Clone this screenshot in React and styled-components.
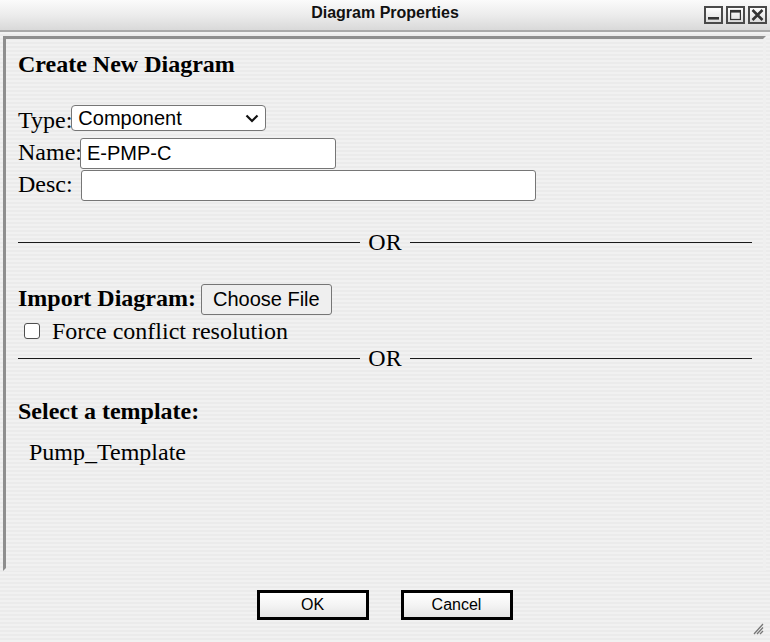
import React from "react";
import styled, { createGlobalStyle } from "styled-components";

const Global = createGlobalStyle`
  html, body { margin: 0; padding: 0; }
  body { width: 770px; height: 642px; overflow: hidden; }
  * { box-sizing: border-box; }
`;

const Window = styled.div`
  position: relative;
  width: 770px;
  height: 642px;
  display: flex;
  flex-direction: column;
  background: repeating-linear-gradient(
    to bottom,
    #f1f1f1 0px,
    #f1f1f1 2px,
    #ebebeb 2px,
    #ebebeb 4px
  );
  font-family: "Liberation Serif", "Times New Roman", serif;
  color: #000;
`;

const TitleBar = styled.div`
  height: 32px;
  flex: none;
  display: flex;
  align-items: center;
  justify-content: center;
  position: relative;
  background: linear-gradient(to bottom, #fbfbfb 0%, #ececec 50%, #d9d9d9 100%);
  border-bottom: 2px solid #a9a9a9;
`;

const Title = styled.div`
  font-family: "Liberation Sans", Arial, sans-serif;
  font-weight: bold;
  font-size: 16px;
  color: #111;
  margin-bottom: 4px;
`;

const Controls = styled.div`
  position: absolute;
  right: 3px;
  top: 6px;
  display: flex;
  gap: 3px;
`;

const CtrlBox = styled.div`
  width: 19px;
  height: 18px;
  border: 2px solid #4a4a4a;
  background: linear-gradient(to bottom, #ffffff, #dcdcdc);
  display: flex;
  align-items: center;
  justify-content: center;
`;

const Body = styled.div`
  flex: 1;
  display: flex;
  flex-direction: column;
  padding: 4px 4px 0 3px;
`;

const Panel = styled.div`
  height: 535px;
  flex: none;
  border-style: solid;
  border-width: 3px;
  border-color: #8e8e8e #efefef #efefef #8e8e8e;
  padding: 11px 11px 0 12px;
  display: flex;
  flex-direction: column;
`;

const Heading = styled.div`
  font-weight: bold;
  font-size: 24px;
  line-height: 28px;
`;

const Rows = styled.div`
  display: flex;
  flex-direction: column;
  margin-top: 27px;
`;

const Row = styled.div`
  display: flex;
  align-items: ${(p) => p.$align || "baseline"};
  margin-top: ${(p) => p.$top || 0}px;
`;

const Label = styled.span`
  font-size: 24px;
  line-height: 28px;
  font-weight: ${(p) => (p.$bold ? "bold" : "normal")};
  white-space: nowrap;
`;

const SelectWrap = styled.div`
  position: relative;
  margin-bottom: 3px;
  margin-left: -1px;
`;

const Select = styled.select`
  appearance: none;
  -webkit-appearance: none;
  width: 195px;
  height: 26px;
  border: 1px solid #767676;
  border-radius: 4px;
  background: #fff;
  font-family: "Liberation Sans", Arial, sans-serif;
  font-size: 20px;
  padding: 0 0 0 6px;
  color: #000;
  display: block;
`;

const Chevron = styled.svg`
  position: absolute;
  right: 7px;
  top: 9px;
  pointer-events: none;
`;

const TextInput = styled.input`
  width: ${(p) => p.$w}px;
  height: 31px;
  margin-left: ${(p) => p.$ml || 0}px;
  border: 1px solid #767676;
  border-radius: 3px;
  background: #fff;
  font-family: "Liberation Sans", Arial, sans-serif;
  font-size: 20px;
  padding: 1px 6px;
  color: #000;
  outline: none;
`;

const Divider = styled.div`
  display: flex;
  align-items: center;
  gap: 8px;
  margin-top: ${(p) => p.$top}px;
  font-size: 24px;
  line-height: 28px;
`;

const Rule = styled.div`
  flex: 1;
  height: 1px;
  background: #1a1a1a;
`;

const FileButton = styled.button`
  height: 31px;
  margin-left: 5px;
  padding: 0 11px;
  border: 1px solid #767676;
  border-radius: 3px;
  background: #efefef;
  font-family: "Liberation Sans", Arial, sans-serif;
  font-size: 20px;
  color: #000;
`;

const Check = styled.input`
  appearance: none;
  -webkit-appearance: none;
  width: 16px;
  height: 16px;
  margin: 0 12px 0 6px;
  border: 1px solid #4f4f4f;
  border-radius: 3px;
  background: #fff;
`;

const Template = styled.div`
  font-size: 24px;
  line-height: 28px;
  margin: 13px 0 0 11px;
`;

const Footer = styled.div`
  flex: 1;
  display: flex;
  justify-content: center;
  align-items: flex-start;
  gap: 32px;
  padding-top: 19px;
`;

const DlgButton = styled.button`
  width: 112px;
  height: 30px;
  border: 3px solid #000;
  background: linear-gradient(to bottom, #ffffff 0%, #f4f4f4 50%, #e4e4e4 100%);
  font-family: "Liberation Sans", Arial, sans-serif;
  font-size: 16px;
  color: #000;
  padding: 0;
`;

const Grip = styled.svg`
  position: absolute;
  right: 6px;
  bottom: 7px;
`;

function MinIcon() {
  return (
    <svg width="13" height="12" viewBox="0 0 13 12">
      <rect x="1" y="8" width="11" height="2.6" fill="#333" />
    </svg>
  );
}
function MaxIcon() {
  return (
    <svg width="13" height="12" viewBox="0 0 13 12">
      <rect x="1.6" y="1.5" width="9.8" height="9" fill="none" stroke="#333" strokeWidth="1.2" />
      <rect x="1" y="1" width="11" height="2.6" fill="#333" />
    </svg>
  );
}
function CloseIcon() {
  return (
    <svg width="13" height="12" viewBox="0 0 13 12">
      <path d="M1.5 1 L11.5 11 M11.5 1 L1.5 11" stroke="#333" strokeWidth="2.6" />
    </svg>
  );
}

export default function App() {
  return (
    <>
      <Global />
      <Window>
        <TitleBar>
          <Title>Diagram Properties</Title>
          <Controls>
            <CtrlBox><MinIcon /></CtrlBox>
            <CtrlBox><MaxIcon /></CtrlBox>
            <CtrlBox><CloseIcon /></CtrlBox>
          </Controls>
        </TitleBar>
        <Body>
          <Panel>
            <Heading>Create New Diagram</Heading>
            <Rows>
              <Row $align="flex-end">
                <Label>Type:</Label>
                <SelectWrap>
                  <Select defaultValue="Component">
                    <option>Component</option>
                    <option>System</option>
                  </Select>
                  <Chevron width="14" height="9" viewBox="0 0 14 9">
                    <path d="M1.5 1.5 L7 7 L12.5 1.5" fill="none" stroke="#111" strokeWidth="2.2" />
                  </Chevron>
                </SelectWrap>
              </Row>
              <Row $top={4}>
                <Label>Name:</Label>
                <TextInput $w={256} $ml={-2} defaultValue="E-PMP-C" />
              </Row>
              <Row $top={1}>
                <Label>Desc:</Label>
                <TextInput $w={455} $ml={8} defaultValue="" />
              </Row>
            </Rows>
            <Divider $top={27}>
              <Rule />
              <span>OR</span>
              <Rule />
            </Divider>
            <Row $top={28}>
              <Label $bold>Import Diagram:</Label>
              <FileButton type="button">Choose File</FileButton>
            </Row>
            <Row $align="center" $top={2}>
              <Check type="checkbox" />
              <Label>Force conflict resolution</Label>
            </Row>
            <Divider $top={-1}>
              <Rule />
              <span>OR</span>
              <Rule />
            </Divider>
            <Row $top={25}>
              <Label $bold>Select a template:</Label>
            </Row>
            <Template>Pump_Template</Template>
          </Panel>
          <Footer>
            <DlgButton type="button">OK</DlgButton>
            <DlgButton type="button">Cancel</DlgButton>
          </Footer>
        </Body>
        <Grip width="11" height="12" viewBox="0 0 11 12">
          <path d="M1 11 L10 1 M4 11 L10 4.5 M7 11 L10 8" stroke="#777" strokeWidth="1.3" />
        </Grip>
      </Window>
    </>
  );
}
